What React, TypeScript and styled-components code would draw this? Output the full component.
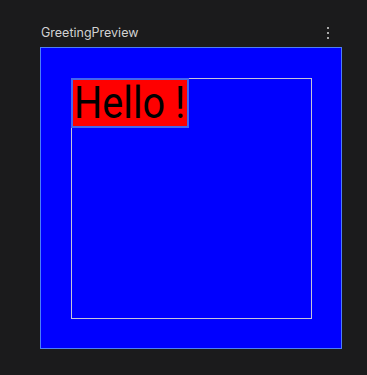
import React from "react";
import styled, { createGlobalStyle } from "styled-components";

const Global = createGlobalStyle`
  html, body { margin: 0; padding: 0; background: #1b1b1c; }
  body { font-family: Inter, "Noto Sans", sans-serif; }
`;

const Page = styled.div`
  width: 367px;
  height: 375px;
  background: #1b1b1c;
  padding: 24px 0 0 40px;
  box-sizing: border-box;
`;

const Header = styled.div`
  width: 302px;
  height: 23px;
  display: flex;
  align-items: flex-start;
  justify-content: space-between;
`;

const Title = styled.span`
  font-family: Inter, sans-serif;
  font-size: 12.5px;
  line-height: 18px;
  color: #d2d2d2;
  padding-left: 1px;
`;

const Menu = styled.div`
  display: flex;
  flex-direction: column;
  gap: 3px;
  padding: 3px 13px 0 0;
`;

const Dot = styled.span`
  width: 2px;
  height: 2px;
  background: #a8a8a8;
`;

const Preview = styled.div`
  width: 302px;
  height: 302px;
  box-sizing: border-box;
  border: 1px solid #4d7ef7;
  background: #0000ff;
  padding: 30px;
`;

const Frame = styled.div`
  width: 241px;
  height: 241px;
  box-sizing: border-box;
  box-shadow: inset 0 0 0 1px #c4c4d8;
  display: flex;
  align-items: flex-start;
`;

const Label = styled.div`
  background: #ff0000;
  border: 2px solid #4466ee;
  box-sizing: border-box;
  width: 118px;
  height: 50px;
  overflow: hidden;
`;

const LabelText = styled.span`
  display: inline-block;
  font-family: Roboto, sans-serif;
  font-size: 44px;
  line-height: 46px;
  color: #000;
  white-space: pre;
  transform: scaleX(0.9);
  transform-origin: 0 0;
  margin-left: 1px;
`;

export default function App() {
  return (
    <>
      <Global />
      <Page>
        <Header>
          <Title>GreetingPreview</Title>
          <Menu>
            <Dot />
            <Dot />
            <Dot />
          </Menu>
        </Header>
        <Preview>
          <Frame>
            <Label>
              <LabelText>Hello !</LabelText>
            </Label>
          </Frame>
        </Preview>
      </Page>
    </>
  );
}
